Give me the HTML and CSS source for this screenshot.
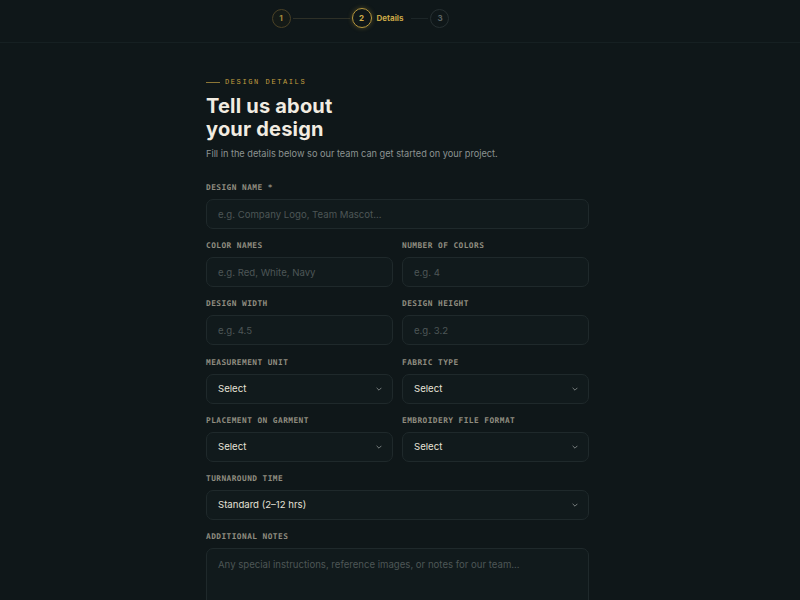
FILE: index.html
```html
<!DOCTYPE html>
<html lang="en">
<head>
<meta charset="utf-8">
<title>Design details</title>
<link rel="stylesheet" href="styles.css">
</head>
<body>
<header class="topbar">
  <div class="stepper">
    <span class="step step-done">1</span>
    <span class="step-line"></span>
    <span class="step step-active">2</span>
    <span class="step-label">Details</span>
    <span class="step-line short"></span>
    <span class="step step-todo">3</span>
  </div>
</header>
<main class="page">
  <section class="form-wrap">
    <div class="eyebrow"><span class="eyebrow-line"></span>DESIGN DETAILS</div>
    <h1 class="title">Tell us about<br>your design</h1>
    <p class="subtitle">Fill in the details below so our team can get started on your project.</p>

    <div class="field first">
      <label class="label">DESIGN NAME *</label>
      <div class="input placeholder">e.g. Company Logo, Team Mascot...</div>
    </div>

    <div class="row">
      <div class="field">
        <label class="label">COLOR NAMES</label>
        <div class="input placeholder">e.g. Red, White, Navy</div>
      </div>
      <div class="field">
        <label class="label">NUMBER OF COLORS</label>
        <div class="input placeholder">e.g. 4</div>
      </div>
    </div>

    <div class="row">
      <div class="field">
        <label class="label">DESIGN WIDTH</label>
        <div class="input placeholder">e.g. 4.5</div>
      </div>
      <div class="field">
        <label class="label">DESIGN HEIGHT</label>
        <div class="input placeholder">e.g. 3.2</div>
      </div>
    </div>

    <div class="row">
      <div class="field">
        <label class="label">MEASUREMENT UNIT</label>
        <div class="input select"><span>Select</span><svg class="chev" viewBox="0 0 10 6"><path d="M1 1l4 4 4-4"/></svg></div>
      </div>
      <div class="field">
        <label class="label">FABRIC TYPE</label>
        <div class="input select"><span>Select</span><svg class="chev" viewBox="0 0 10 6"><path d="M1 1l4 4 4-4"/></svg></div>
      </div>
    </div>

    <div class="row">
      <div class="field">
        <label class="label">PLACEMENT ON GARMENT</label>
        <div class="input select"><span>Select</span><svg class="chev" viewBox="0 0 10 6"><path d="M1 1l4 4 4-4"/></svg></div>
      </div>
      <div class="field">
        <label class="label">EMBROIDERY FILE FORMAT</label>
        <div class="input select"><span>Select</span><svg class="chev" viewBox="0 0 10 6"><path d="M1 1l4 4 4-4"/></svg></div>
      </div>
    </div>

    <div class="field">
      <label class="label">TURNAROUND TIME</label>
      <div class="input select"><span>Standard (2–12 hrs)</span><svg class="chev" viewBox="0 0 10 6"><path d="M1 1l4 4 4-4"/></svg></div>
    </div>

    <div class="field">
      <label class="label">ADDITIONAL NOTES</label>
      <div class="input textarea placeholder">Any special instructions, reference images, or notes for our team...</div>
    </div>
  </section>
</main>
</body>
</html>
```
FILE: styles.css
```css
* { box-sizing: border-box; }
html, body { margin: 0; padding: 0; }
body {
  background: #0f1719;
  font-family: "Inter", "DejaVu Sans", sans-serif;
  color: #e9e5db;
  height: 600px;
  overflow: hidden;
}
.topbar {
  height: 43px;
  border-bottom: 1px solid #162022;
  display: flex;
  justify-content: center;
  align-items: flex-start;
  padding-top: 8px;
  padding-right: 79px;
}
.stepper {
  display: flex;
  align-items: center;
}
.step {
  width: 19px;
  height: 19px;
  border-radius: 50%;
  display: flex;
  align-items: center;
  justify-content: center;
  font-size: 8px;
  font-weight: 700;
}
.step-done {
  border: 1px solid #4b4226;
  color: #a58a3c;
  background: #141a17;
}
.step-active {
  width: 20px;
  height: 20px;
  border: 1.5px solid #b8983d;
  color: #d0ad4a;
  box-shadow: 0 0 5px rgba(200, 165, 60, 0.35);
}
.step-todo {
  border: 1px solid #262f31;
  color: #5b6464;
}
.step-line {
  width: 57px;
  height: 1px;
  background: #2e3027;
  margin: 0 2px;
}
.step-line.short {
  width: 17px;
  background: #1d2628;
}
.step-label {
  font-size: 8px;
  font-weight: 700;
  color: #c9a747;
  margin: 0 6px 0 5px;
}
.page {
  display: flex;
  justify-content: center;
  padding-right: 5px;
}
.form-wrap {
  width: 383px;
  padding-top: 34px;
}
.eyebrow {
  display: flex;
  align-items: center;
  font-family: "Liberation Mono", "DejaVu Sans Mono", monospace;
  font-size: 7px;
  letter-spacing: 1.6px;
  color: #c39f40;
  height: 10px;
}
.eyebrow-line {
  width: 14px;
  height: 1px;
  background: #8c7636;
  margin-right: 5px;
}
.title {
  margin: 8px 0 0;
  font-size: 20px;
  line-height: 23px;
  font-weight: 700;
  letter-spacing: 0.2px;
  color: #f1ece1;
}
.subtitle {
  margin: 6px 0 0;
  font-size: 9.2px;
  line-height: 14px;
  color: #8c9391;
}
.field {
  display: flex;
  flex-direction: column;
  margin-top: 13.2px;
  flex: 1;
  min-width: 0;
}
.field.first { margin-top: 23px; }
.row {
  display: flex;
  gap: 9px;
}
.label {
  font-family: "DejaVu Sans Mono", "Liberation Mono", monospace;
  font-weight: 700;
  font-size: 7.8px;
  letter-spacing: 0.45px;
  color: #908d80;
  height: 8px;
  line-height: 8px;
  margin-bottom: 7px;
}
.input {
  height: 30px;
  border: 1px solid #1f292b;
  border-radius: 7px;
  background: #111a1c;
  display: flex;
  align-items: center;
  padding: 0 11px;
  font-size: 9.6px;
}
.placeholder { color: #4d5656; }
.select {
  justify-content: space-between;
  color: #e6e2d8;
}
.chev {
  width: 6px;
  height: 4px;
  fill: none;
  stroke: #8b9190;
  stroke-width: 1.4;
  margin-right: -1px;
}
.textarea {
  height: 80px;
  align-items: flex-start;
  padding-top: 10px;
}
```
